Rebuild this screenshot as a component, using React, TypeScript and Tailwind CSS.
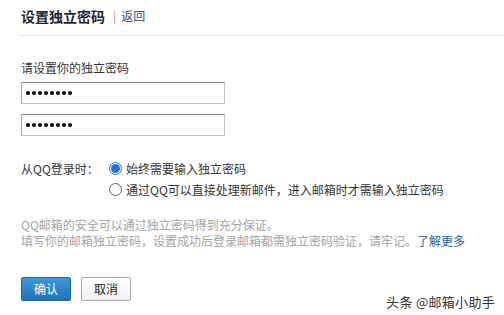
import React from 'react';

const font = "font-['Microsoft_YaHei','Noto_Sans_CJK_SC',sans-serif]";

const Dots: React.FC = () => (
  <div className="flex items-center gap-[2px]">
    {Array.from({ length: 8 }).map((_, i) => (
      <span key={i} className="w-[4px] h-[4px] rounded-full bg-black" />
    ))}
  </div>
);

const PasswordBox: React.FC = () => (
  <div className="w-[204px] h-[22px] flex items-center pl-[4px] bg-white border border-[#c4c4c4] border-t-[#8a8a8a] border-l-[#a8a8a8]">
    <Dots />
  </div>
);

const Radio: React.FC<{ checked?: boolean; label: string }> = ({ checked, label }) => (
  <label className="flex items-center h-[21px]">
    <span
      className={
        checked
          ? 'w-[13px] h-[13px] rounded-full border border-[#1a73e8] flex items-center justify-center bg-white'
          : 'w-[13px] h-[13px] rounded-full border border-[#5f5f5f] bg-white'
      }
    >
      {checked && <span className="w-[9px] h-[9px] rounded-full bg-[#1a73e8]" />}
    </span>
    <span className="ml-[4px] text-[12px] text-[#333]">{label}</span>
  </label>
);

const App: React.FC = () => {
  return (
    <div className={`relative w-[504px] h-[315px] bg-white overflow-hidden ${font}`}>
      {/* Header */}
      <div className="ml-[20px] h-[36px] border-b border-[#e3e3e3] flex items-center pb-[3px] pl-[1px]">
        <h1 className="text-[14px] font-bold text-[#1e2633]">设置独立密码</h1>
        <span className="ml-[8px] text-[12px] text-[#999]">|</span>
        <a className="ml-[5px] text-[12px] text-[#3d4f70]">返回</a>
      </div>

      <div className="pl-[21px]">
        {/* Password fields */}
        <div className="mt-[24px] text-[12px] leading-[16px] text-[#333]">请设置你的独立密码</div>
        <div className="mt-[6px] flex flex-col gap-[10px]">
          <PasswordBox />
          <PasswordBox />
        </div>

        {/* QQ login option */}
        <div className="mt-[22px] flex">
          <div className="w-[88px] h-[21px] flex items-center text-[12px] text-[#333]">从QQ登录时：</div>
          <div className="flex flex-col">
            <Radio checked label="始终需要输入独立密码" />
            <Radio label="通过QQ可以直接处理新邮件，进入邮箱时才需输入独立密码" />
          </div>
        </div>

        {/* Info */}
        <div className="mt-[17px] text-[12px] leading-[16px] text-[#a3a3a3]">
          <p>QQ邮箱的安全可以通过独立密码得到充分保证。</p>
          <p>
            填写你的邮箱独立密码，设置成功后登录邮箱都需独立密码验证，请牢记。
            <a className="text-[#1d5ea5]">了解更多</a>
          </p>
        </div>

        {/* Buttons */}
        <div className="mt-[28px] flex gap-[10px]">
          <button className="w-[50px] h-[24px] rounded-[2px] border border-[#1d68a8] bg-gradient-to-b from-[#3b97d8] to-[#2173b8] text-white text-[12px]">
            确认
          </button>
          <button className="w-[50px] h-[24px] rounded-[2px] border border-[#a8a8a8] bg-gradient-to-b from-white to-[#f1f1f1] text-[#222] text-[12px]">
            取消
          </button>
        </div>
      </div>

      {/* Watermark */}
      <div className="absolute right-[9px] bottom-[4px] text-[13px] text-[#333] tracking-[0.3px]">
        头条 @邮箱小助手
      </div>
    </div>
  );
};

export default App;
